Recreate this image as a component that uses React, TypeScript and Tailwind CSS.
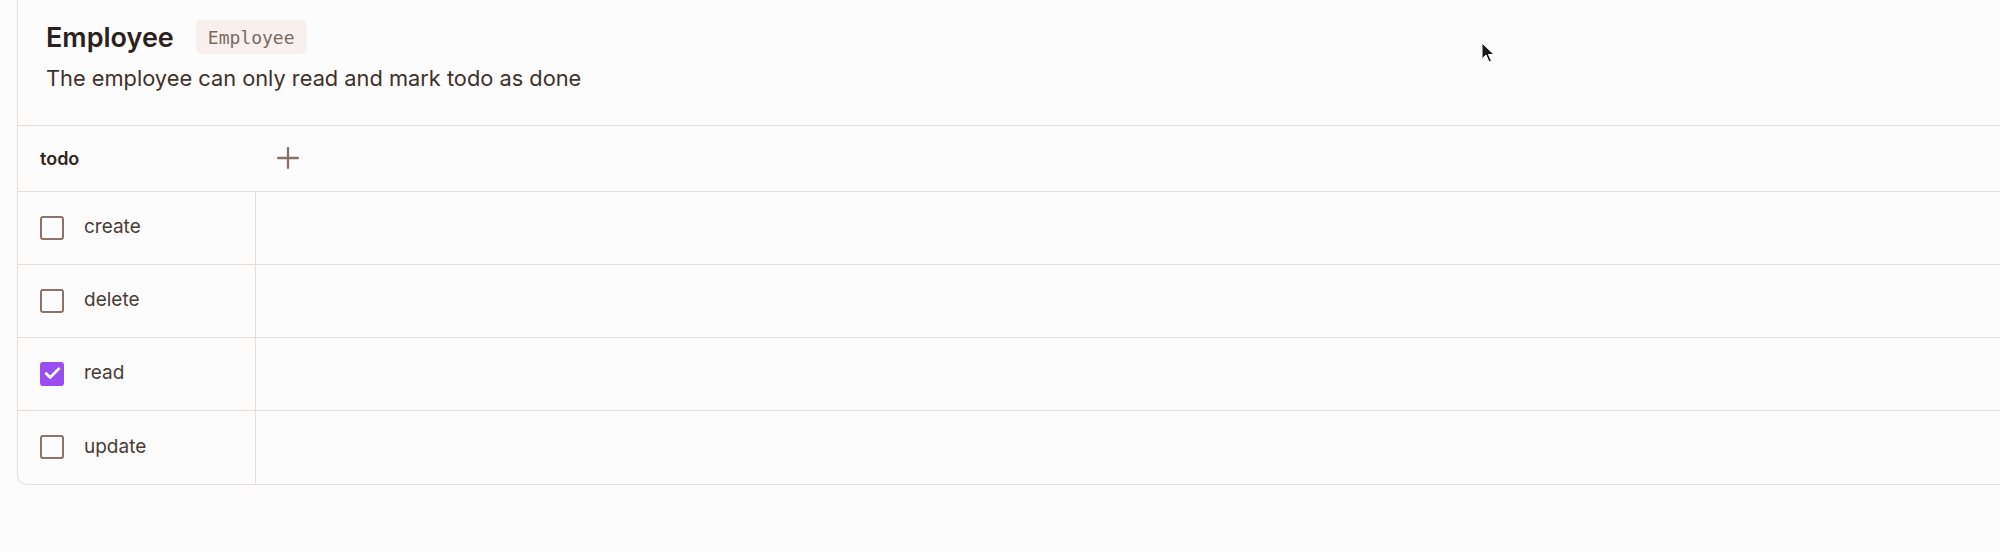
import { Check, Plus } from "lucide-react";

type Permission = {
    name: string;
    checked: boolean;
};

const permissions: Permission[] = [
    { name: "create", checked: false },
    { name: "delete", checked: false },
    { name: "read", checked: true },
    { name: "update", checked: false },
];

function Checkbox({ checked }: { checked: boolean }) {
    if (checked) {
        return (
            <span className="flex h-[24px] w-[24px] items-center justify-center rounded-[3px] bg-[#9a4ef0]">
                <Check className="h-[19px] w-[19px] text-white" strokeWidth={3.5} />
            </span>
        );
    }
    return <span className="block h-[24px] w-[24px] rounded-[3px] border-[2.5px] border-[#8d7369]" />;
}

export default function App() {
    return (
        <div
            className="relative h-[552px] w-[2000px] overflow-hidden bg-[#fcfbfb] pl-[17px]"
            style={{ fontFamily: "Inter, 'Noto Sans', sans-serif" }}
        >
            <div className="w-[2100px] rounded-bl-[10px] border-b border-l border-[#e6dedb] bg-[#fdfcfc]">
                {/* role header */}
                <div className="border-b border-[#e6dedb] pl-[28px] pt-[20px] pb-[31.5px]">
                    <div className="flex h-[34px] items-center gap-[22px]">
                        <h1 className="text-[27px] font-semibold leading-none text-[#2b211d]">Employee</h1>
                        <span
                            className="flex h-[34px] items-center rounded-[5px] bg-[#f7f0ec] px-[12px] text-[18px] text-[#7a6a64]"
                            style={{ fontFamily: "'DejaVu Sans Mono', 'Liberation Mono', monospace" }}
                        >
                            Employee
                        </span>
                    </div>
                    <p className="mt-[9px] text-[21.8px] leading-[30px] text-[#3f322b]">
                        The employee can only read and mark todo as done
                    </p>
                </div>

                {/* table header */}
                <div className="flex h-[66px] items-center border-b border-[#e6dedb]">
                    <div className="w-[238px] px-[22px] text-[18px] font-semibold text-[#2e2420]">todo</div>
                    <div className="pl-[15px]">
                        <Plus className="h-[34px] w-[34px] text-[#8a6f65]" strokeWidth={1.6} />
                    </div>
                </div>

                {/* rows */}
                {permissions.map((p, i) => (
                    <div
                        key={p.name}
                        className={
                            i < permissions.length - 1
                                ? "flex h-[73px] border-b border-[#e6dedb]"
                                : "flex h-[73px]"
                        }
                    >
                        <div className="flex w-[238px] items-center gap-[20px] border-r border-[#e6dedb] px-[22px]">
                            <Checkbox checked={p.checked} />
                            <span className="text-[19px] text-[#4a3c36]">{p.name}</span>
                        </div>
                        <div className="flex-1" />
                    </div>
                ))}
            </div>

            {/* mouse cursor */}
            <svg
                className="absolute left-[1481px] top-[42px]"
                width="15"
                height="22"
                viewBox="0 0 15 22"
            >
                <path d="M1 1 L1 17 L5 13 L8 20 L10.5 19 L7.5 12.5 L13 12.5 Z" fill="#1a1a1a" stroke="#ffffff" strokeWidth="1" />
            </svg>
        </div>
    );
}
